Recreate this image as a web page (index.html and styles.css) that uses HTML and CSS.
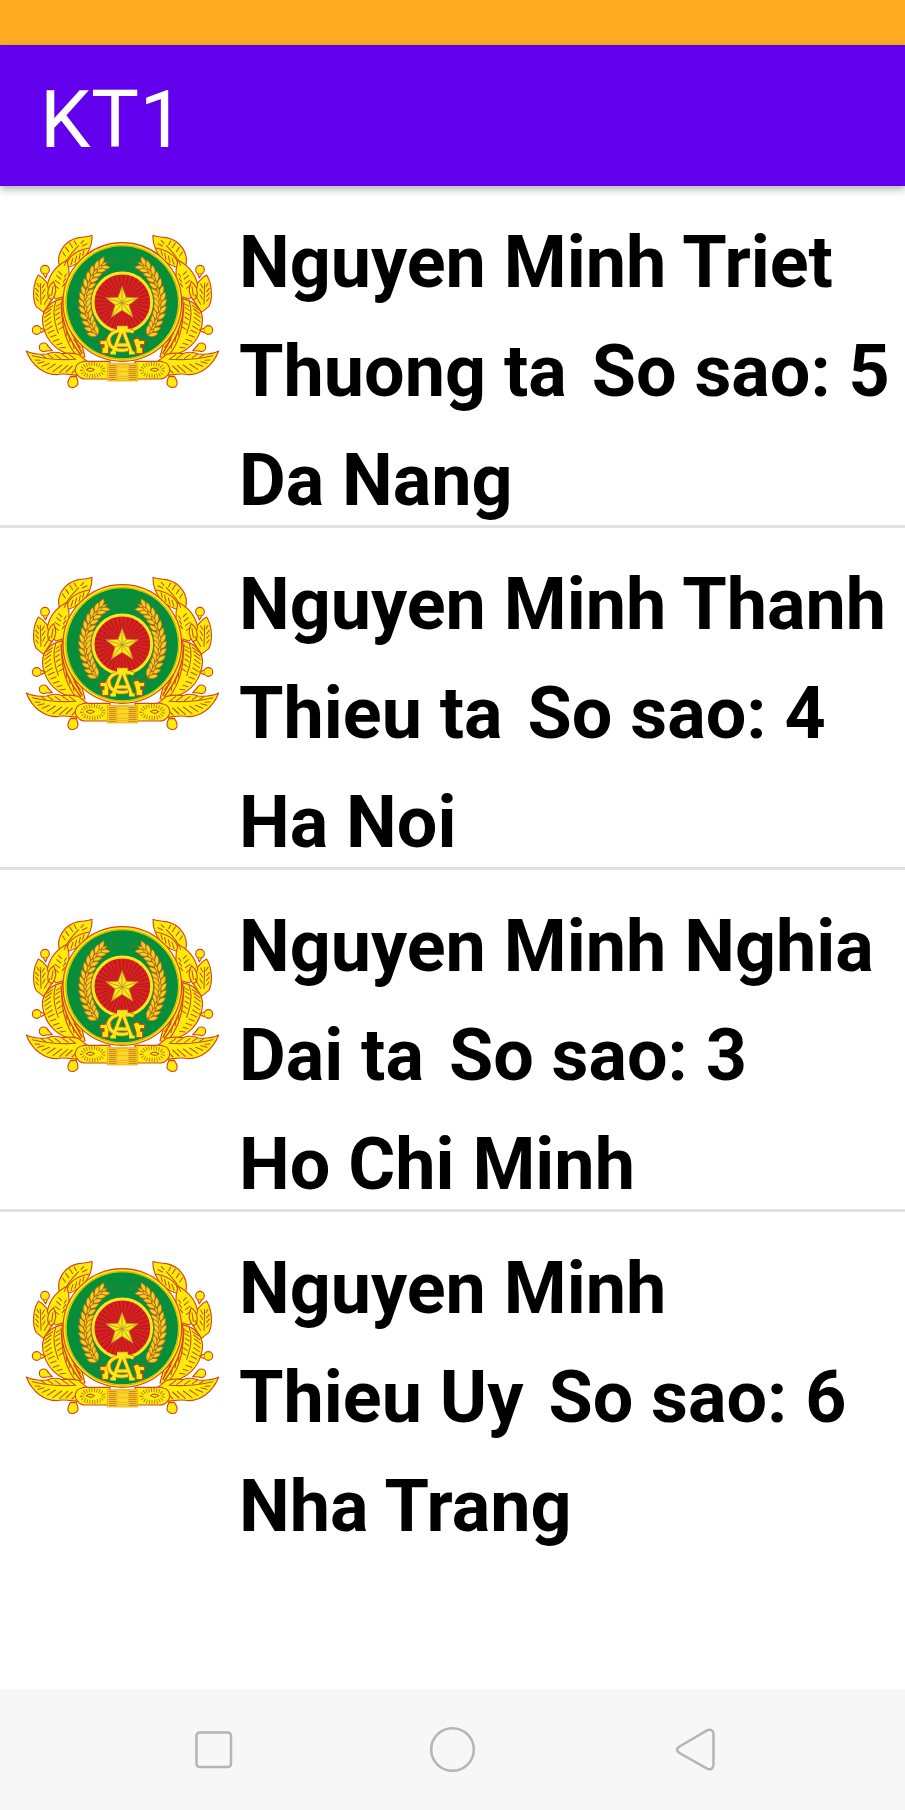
FILE: index.html
```html
<!DOCTYPE html>
<html lang="vi">
<head>
<meta charset="utf-8">
<title>KT1</title>
<link rel="stylesheet" href="styles.css">
</head>
<body>
<svg class="defs" aria-hidden="true">
  <defs>
    <g id="grain">
      <path d="M210 241C196 239 190 228 191 215C203 218 209 226 210 241Z"/>
      <path d="M210 241C223 239 230 228 229 215C218 218 211 226 210 241Z"/>
      <path d="M210 238C205 230 206 221 210 214C215 221 215 230 210 238Z"/>
    </g>
    <g id="leaves">
      <g class="gold">
        <path d="M133 122C124 88 145 48 190 38Q215 37 231 31C233 60 218 88 202 104C184 120 165 126 150 128Z"/>
        <path d="M158 124C152 104 175 78 222 69"/>
        <path d="M70 150C52 180 52 225 64 245L86 262L118 212C108 190 92 160 70 150Z"/>
        <path d="M156 106C120 124 103 152 97 180Q100 196 108 206L122 222L150 214C164 180 166 140 156 106Z"/>
        <path d="M100 218C95 195 104 178 116 170C127 190 124 206 112 224Z"/>
        <path d="M142 222C175 275 196 335 210 396L178 398C140 350 130 270 142 222Z"/>
        <path d="M142 221C100 230 76 262 84 300C92 345 126 385 184 392C146 345 136 286 142 221Z"/>
        <circle cx="90" cy="134" r="13"/><path d="M85 147L92 159L97 146"/>
        <circle cx="65" cy="315" r="13"/><path d="M76 309L92 315L78 323"/>
        <circle cx="86" cy="367" r="13"/><path d="M96 360L112 377L92 378"/>
        <path d="M167 454C150 478 162 490 176 487C194 482 190 468 184 455Z"/>
        <path d="M34 378C50 386 72 389 95 387Q118 377 142 386Q163 382 190 388L218 410L196 452C160 448 142 444 126 449C90 449 52 425 34 378Z"/>
      </g>
      <path class="vein" d="M148 121C157 95 176 78 191 62M151 93l-8 -12M161 80l-9 -13M173 68l-9 -14M184 59l-6 -11M198 55l8 -8M202 63l14 -7M168 118l6 -18M180 112l5 -19M192 103l4 -18M203 91l4 -14
        M78 238L76 175M70 228l-7 -9M70 214l-8 -10M70 200l-8 -10M72 185l-6 -10M83 222l7 -12M82 205l8 -13M81 189l7 -12M88 238l9 -15M99 220l6 -11
        M131 190l-13 -9M134 176l-14 -10M137 162l-12 -10M140 149l-9 -9M142 185l7 -9M145 171l7 -10M148 156l6 -9
        M110 211L114 185M122 230Q109 270 130 325M113 242l-18 12M109 252l-18 14M107 264l-18 13M107 277l-17 13M109 290l-17 12M112 303l-16 10M117 316l-17 8M123 330l-16 6M132 343l-17 6M141 355l-15 4M151 367l-16 2M124 244l9 -6M122 256l12 -8M122 270l12 -8M124 284l11 -8M128 299l11 -8M132 313l11 -7
        M157 293l20 24M163 310l20 24M170 326l20 24M177 344l19 23M156 332l-3 -15M165 351l-3 -17M177 371l-4 -17
        M52 392Q115 407 183 403M78 389l13 8M99 388l14 10M120 389l16 11M143 389l17 11M163 389l16 12M60 405l15 1M69 415l18 -5M82 424l21 -9M97 433l24 -16M114 440l26 -20M134 442l24 -21M153 441l19 -18M171 444l13 -13"/>
      <path class="midrib" d="M138 232C140 290 163 347 198 390M148 252C160 300 180 350 202 386"/>
    </g>
    <g id="wheat">
      <g class="wheat">
        <use href="#grain" transform="translate(-3 -16) rotate(59 322 232)"/>
        <use href="#grain" transform="translate(-3 -14) rotate(51 322 232)"/>
        <use href="#grain" transform="translate(-3 -11) rotate(42 322 232)"/>
        <use href="#grain" transform="translate(-2 -8) rotate(33 322 232)"/>
        <use href="#grain" transform="translate(-1 -4) rotate(24 322 232)"/>
        <use href="#grain" transform="rotate(15 322 232)"/>
        <use href="#grain" transform="rotate(6 322 232)"/>
        <use href="#grain" transform="rotate(-3 322 232)"/>
        <use href="#grain" transform="translate(0 1) rotate(-12 322 232)"/>
        <use href="#grain" transform="translate(0 3) rotate(-21 322 232)"/>
        <use href="#grain" transform="translate(0 6) rotate(-30 322 232)"/>
        <use href="#grain" transform="translate(-1 9) rotate(-38 322 232)"/>
        <use href="#grain" transform="translate(-2 13) rotate(-45 322 232)"/>
      </g>
      <path class="ear" d="M276 99h37M282 108h28M286 116h22"/>
    </g>
    <symbol id="emblem" viewBox="0 0 645 510">
      <use href="#leaves"/>
      <use href="#leaves" transform="translate(645 0) scale(-1 1)"/>
      <ellipse class="gold" cx="322" cy="231" rx="178" ry="178"/>
      <ellipse class="rim" cx="322" cy="232" rx="170" ry="171"/>
      <ellipse class="green" cx="322" cy="232" rx="167" ry="168"/>
      <use href="#wheat"/>
      <use href="#wheat" transform="translate(645 0) scale(-1 1)"/>
      <circle class="ring" cx="322" cy="232" r="88"/>
      <circle class="rays" cx="322" cy="232" r="41"/>
      <path class="star" d="M321 184L334 217L370 218L342 240L354 277L321 256L289 277L300 240L272 218L309 217Z"/>
      <path class="facet" d="M321 187V254M275 219L342 240M368 219L300 240M291 274L334 217M352 274L309 217"/>
      <path class="gold" d="M255 346H270L276 337L289 345L281 370V386H261V367H267V359H255ZM389 346H374L368 337L355 345L363 370V386H383V367H377V359H389Z"/>
      <path class="mono-edge" d="M356 321C332 309 289 315 281 341C279 369 309 382 339 373M322 310L294 384M322 310L350 384M304 360H342M306 308H338"/>
      <path class="mono" d="M356 321C332 309 289 315 281 341C279 369 309 382 339 373M322 310L294 384M322 310L350 384M304 360H342M306 308H338M286 384H303M342 384H359"/>
      <g class="gold">
        <path d="M201 411Q208 407 222 409H285V462H213C190 462 177 442 182 427Q187 413 201 411Z"/>
        <path d="M444 411Q437 407 423 409H360V462H432C455 462 468 442 463 427Q458 413 444 411Z"/>
      </g>
      <path class="roll" d="M201 435a32 18 0 1 0 64 0a32 18 0 1 0 -64 0M380 435a32 18 0 1 0 64 0a32 18 0 1 0 -64 0"/>
      <path class="vein" d="M214 434Q225 425 238 434Q227 444 214 434M407 434Q418 425 431 434Q420 444 407 434"/>
      <path class="bundle" d="M277 415H368V468H277Z"/>
      <path class="cords" d="M281 421H304M281 427H304M281 433H304M281 439H304M281 445H304M281 451H304M281 457H304M281 463H304M342 421H365M342 427H365M342 433H365M342 439H365M342 445H365M342 451H365M342 457H365M342 463H365"/>
      <path class="cords faint" d="M309 419H338M309 426H338M309 440H338M309 454H338M309 461H338M307 416V467M340 416V467"/>
    </symbol>
  </defs>
</svg>

<div class="screen">
  <div class="status"></div>
  <header class="appbar"><h1 class="title">KT1</h1></header>
  <main class="list">
    <article class="row">
      <svg class="emblem"><use href="#emblem"/></svg>
      <div class="info">
        <p class="line">Nguyen Minh Triet</p>
        <p class="line pair"><span>Thuong ta</span><span>So sao: 5</span></p>
        <p class="line">Da Nang</p>
      </div>
    </article>
    <article class="row">
      <svg class="emblem"><use href="#emblem"/></svg>
      <div class="info">
        <p class="line">Nguyen Minh Thanh</p>
        <p class="line pair"><span>Thieu ta</span><span>So sao: 4</span></p>
        <p class="line">Ha Noi</p>
      </div>
    </article>
    <article class="row">
      <svg class="emblem"><use href="#emblem"/></svg>
      <div class="info">
        <p class="line">Nguyen Minh Nghia</p>
        <p class="line pair"><span>Dai ta</span><span>So sao: 3</span></p>
        <p class="line">Ho Chi Minh</p>
      </div>
    </article>
    <article class="row">
      <svg class="emblem"><use href="#emblem"/></svg>
      <div class="info">
        <p class="line">Nguyen Minh</p>
        <p class="line pair"><span>Thieu Uy</span><span>So sao: 6</span></p>
        <p class="line">Nha Trang</p>
      </div>
    </article>
  </main>
  <nav class="navbar">
    <svg class="key" viewBox="0 0 48 48"><rect x="6.5" y="6.5" width="34.5" height="34.5" rx="3"/></svg>
    <svg class="key" viewBox="0 0 48 48"><circle cx="23.500" cy="23.500" r="21.3"/></svg>
    <svg class="key back" viewBox="0 0 48 48"><path d="M6.500 20.500L34 4.300Q39.500 2.500 40.500 7.500V39Q39.500 45 34 42.700L6.500 27Q1.500 23.700 6.500 20.500Z"/></svg>
  </nav>
</div>
</body>
</html>
```
FILE: styles.css
```css
* { box-sizing: border-box; }
body { margin: 0; background: #fff; font-family: Roboto, sans-serif; color: #000; }
.defs { display: block; width: 0; height: 0; }
.screen { display: flex; flex-direction: column; width: 905px; height: 1810px; overflow: hidden; }
.status { flex: none; height: 45px; background: #ffac21; }
.appbar {
  flex: none; height: 141px; padding: 8px 0 0 40px;
  display: flex; align-items: center;
  background: #6200ee; box-shadow: 0 3px 8px rgba(0, 0, 0, .32);
}
.title { margin: 0; color: #fff; font-size: 80.5px; font-weight: 400; line-height: 94px; letter-spacing: .5px; }
.list { flex: 1; min-height: 0; }
.row {
  display: flex; align-items: flex-start; gap: 9px;
  height: 341.9px; padding-left: 15px;
  border-bottom: 3px solid #e0e0e0;
}
.row:last-child { border-bottom: 0; }
.emblem { flex: none; width: 215px; height: 170px; margin-top: 39px; }
.info { display: flex; flex-direction: column; gap: 25px; padding-top: 35px; }
.line { margin: 0; font-size: 71.9px; font-weight: 700; line-height: 84px; white-space: nowrap; }
.pair { display: flex; gap: 25px; }
.navbar {
  flex: none; height: 121px; padding-left: 190px;
  display: flex; align-items: center; gap: 191px;
  background: #f7f7f7;
}
.key { width: 48px; height: 48px; fill: none; stroke: #b5b5b5; stroke-width: 2.5; }
.back { margin-left: 5px; }

.gold { fill: #ffeb0a; stroke: #d4461a; stroke-width: 3.4; stroke-linejoin: round; }
.wheat { fill: #f4cf1c; stroke: #b8601c; stroke-width: 2.4; }
.rim { fill: none; stroke: #b98a14; stroke-width: 2; }
.green { fill: #078e3b; }
.ear { fill: none; stroke: #457e2b; stroke-width: 2; }
.vein { fill: none; stroke: #b9560f; stroke-width: 3.2; stroke-linecap: round; }
.midrib { fill: none; stroke: #d8401c; stroke-width: 4; }
.ring { fill: #dc2021; stroke: #ffe51a; stroke-width: 9; }
.rays { fill: none; stroke: #a71e1d; stroke-width: 82; stroke-dasharray: 2 5.155; }
.star { fill: #ffe91e; stroke: #b97818; stroke-width: 2; }
.facet { fill: none; stroke: #b49424; stroke-width: 2.5; }
.mono-edge { fill: none; stroke: #c36c18; stroke-width: 13; }
.mono { fill: none; stroke: #ffe817; stroke-width: 9; }
.roll { fill: none; stroke: #b8740f; stroke-width: 12; stroke-dasharray: 2.5 5; }
.bundle { fill: #fbd926; stroke: #e69c12; stroke-width: 2; }
.cords { fill: none; stroke: #bc6518; stroke-width: 2.5; }
.faint { stroke: #e5a522; stroke-width: 2; }
```
